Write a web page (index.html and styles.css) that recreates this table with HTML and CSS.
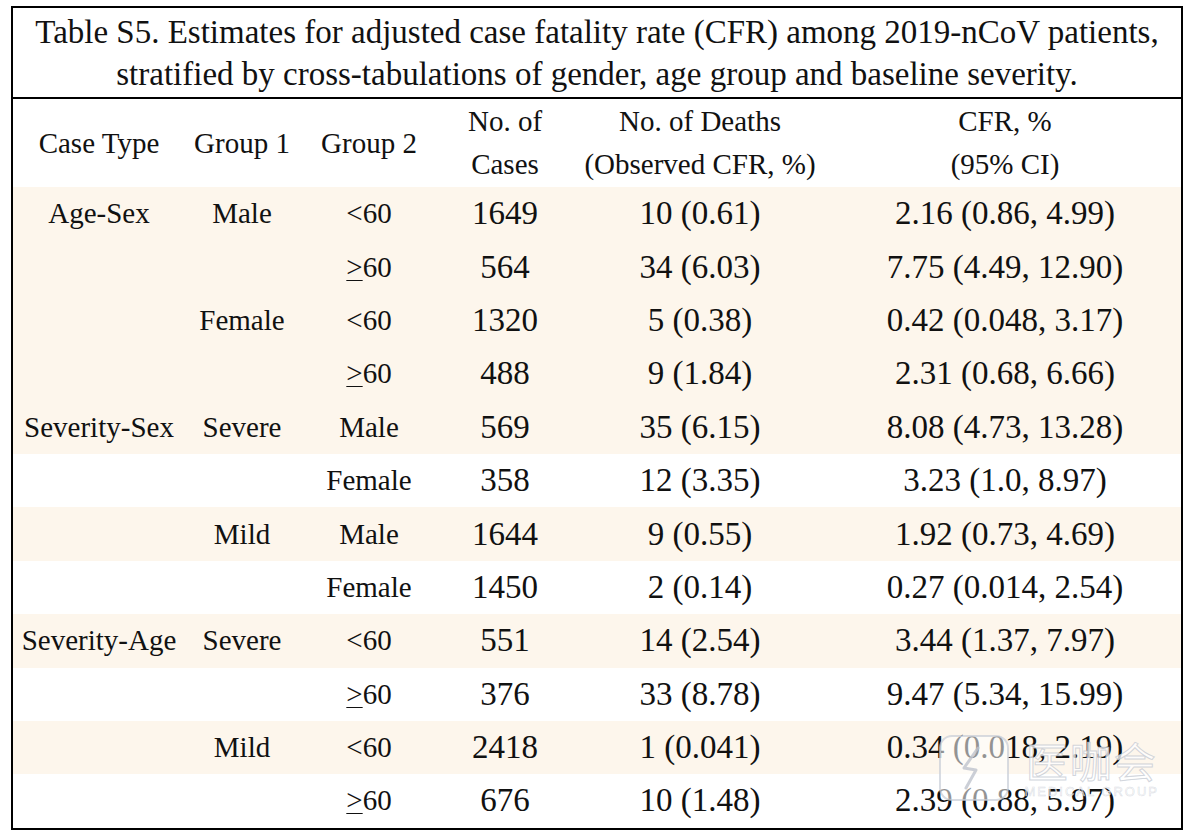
FILE: index.html
```html
<!DOCTYPE html>
<html>
<head>
<meta charset="utf-8">
<link rel="stylesheet" href="styles.css">
</head>
<body>
<div class="frame">
  <div class="title">Table S5. Estimates for adjusted case fatality rate (CFR) among 2019-nCoV patients,<br>stratified by cross-tabulations of gender, age group and baseline severity.</div>
  <table class="grid">
    <colgroup>
      <col class="c1"><col class="c2"><col class="c3"><col class="c4"><col class="c5"><col class="c6">
    </colgroup>
    <thead>
      <tr class="head">
        <th>Case Type</th>
        <th>Group 1</th>
        <th>Group 2</th>
        <th>No. of<br>Cases</th>
        <th>No. of Deaths<br>(Observed CFR, %)</th>
        <th>CFR, %<br>(95% CI)</th>
      </tr>
    </thead>
    <tbody>
      <tr class="tint"><td class="lab">Age-Sex</td><td class="lab">Male</td><td class="lab">&lt;60</td><td class="num">1649</td><td class="num">10 (0.61)</td><td class="num">2.16 (0.86, 4.99)</td></tr>
      <tr class="tint"><td></td><td></td><td class="lab"><u>&gt;</u>60</td><td class="num">564</td><td class="num">34 (6.03)</td><td class="num">7.75 (4.49, 12.90)</td></tr>
      <tr class="tint"><td></td><td class="lab">Female</td><td class="lab">&lt;60</td><td class="num">1320</td><td class="num">5 (0.38)</td><td class="num">0.42 (0.048, 3.17)</td></tr>
      <tr class="tint"><td></td><td></td><td class="lab"><u>&gt;</u>60</td><td class="num">488</td><td class="num">9 (1.84)</td><td class="num">2.31 (0.68, 6.66)</td></tr>
      <tr class="tint"><td class="lab">Severity-Sex</td><td class="lab">Severe</td><td class="lab">Male</td><td class="num">569</td><td class="num">35 (6.15)</td><td class="num">8.08 (4.73, 13.28)</td></tr>
      <tr><td></td><td></td><td class="lab">Female</td><td class="num">358</td><td class="num">12 (3.35)</td><td class="num">3.23 (1.0, 8.97)</td></tr>
      <tr class="tint"><td></td><td class="lab">Mild</td><td class="lab">Male</td><td class="num">1644</td><td class="num">9 (0.55)</td><td class="num">1.92 (0.73, 4.69)</td></tr>
      <tr><td></td><td></td><td class="lab">Female</td><td class="num">1450</td><td class="num">2 (0.14)</td><td class="num">0.27 (0.014, 2.54)</td></tr>
      <tr class="tint"><td class="lab">Severity-Age</td><td class="lab">Severe</td><td class="lab">&lt;60</td><td class="num">551</td><td class="num">14 (2.54)</td><td class="num">3.44 (1.37, 7.97)</td></tr>
      <tr><td></td><td></td><td class="lab"><u>&gt;</u>60</td><td class="num">376</td><td class="num">33 (8.78)</td><td class="num">9.47 (5.34, 15.99)</td></tr>
      <tr class="tint"><td></td><td class="lab">Mild</td><td class="lab">&lt;60</td><td class="num">2418</td><td class="num">1 (0.041)</td><td class="num">0.34 (0.018, 2.19)</td></tr>
      <tr><td></td><td></td><td class="lab"><u>&gt;</u>60</td><td class="num">676</td><td class="num">10 (1.48)</td><td class="num">2.39 (0.88, 5.97)</td></tr>
    </tbody>
  </table>
  <div class="watermark" aria-hidden="true">
    <svg class="wm-logo" width="72" height="68" viewBox="0 0 72 68">
      <rect x="2" y="2" width="68" height="64" rx="12" fill="rgba(255,255,255,0.55)" stroke="rgba(200,205,215,0.7)" stroke-width="2"/>
      <path d="M40 14 L26 34 L38 36 L28 54" fill="none" stroke="rgba(190,195,205,0.8)" stroke-width="3" stroke-linecap="round" stroke-linejoin="round"/>
    </svg>
    <span class="wm-text">医咖会<small>MEDICAL GROUP</small></span>
  </div>
</div>
</body>
</html>
```
FILE: styles.css
```css
html, body {
  margin: 0;
  padding: 0;
  background: #ffffff;
}
body {
  font-family: "Liberation Serif", "Times New Roman", serif;
  color: #111;
}
.frame {
  position: relative;
  width: 1168px;
  margin: 6px 0 0 11px;
  border: 2px solid #000;
  overflow: hidden;
}
.title {
  font-size: 33px;
  line-height: 42px;
  text-align: center;
  padding: 3px 0 2px;
  border-bottom: 2px solid #000;
}
.grid {
  width: 1168px;
  border-collapse: collapse;
  table-layout: fixed;
}
.c1 { width: 172px; }
.c2 { width: 114px; }
.c3 { width: 140px; }
.c4 { width: 132px; }
.c5 { width: 258px; }
.c6 { width: 352px; }
.grid th {
  font-weight: normal;
  font-size: 29px;
  line-height: 43px;
  height: 88px;
  padding: 0;
  text-align: center;
  vertical-align: middle;
}
.grid td {
  height: 53.4px;
  padding: 0;
  text-align: center;
  vertical-align: middle;
}
.lab { font-size: 29px; }
.num { font-size: 33px; }
.lab u { text-decoration-thickness: 1px; text-underline-offset: 3px; }
.tint { background: #fdf6ec; }
.watermark {
  position: absolute;
  right: 22px;
  bottom: 26px;
  display: flex;
  align-items: center;
  gap: 14px;
  pointer-events: none;
}
.wm-text {
  display: flex;
  flex-direction: column;
  align-items: center;
  font-family: "Noto Sans CJK SC", sans-serif;
  font-size: 42px;
  line-height: 48px;
  color: rgba(255, 255, 255, 0.75);
  -webkit-text-stroke: 1px rgba(190, 196, 206, 0.7);
  letter-spacing: 2px;
}
.wm-text small {
  font-family: "Liberation Sans", sans-serif;
  font-size: 13px;
  line-height: 16px;
  letter-spacing: 2px;
  -webkit-text-stroke: 0.5px rgba(190, 196, 206, 0.6);
}
```
